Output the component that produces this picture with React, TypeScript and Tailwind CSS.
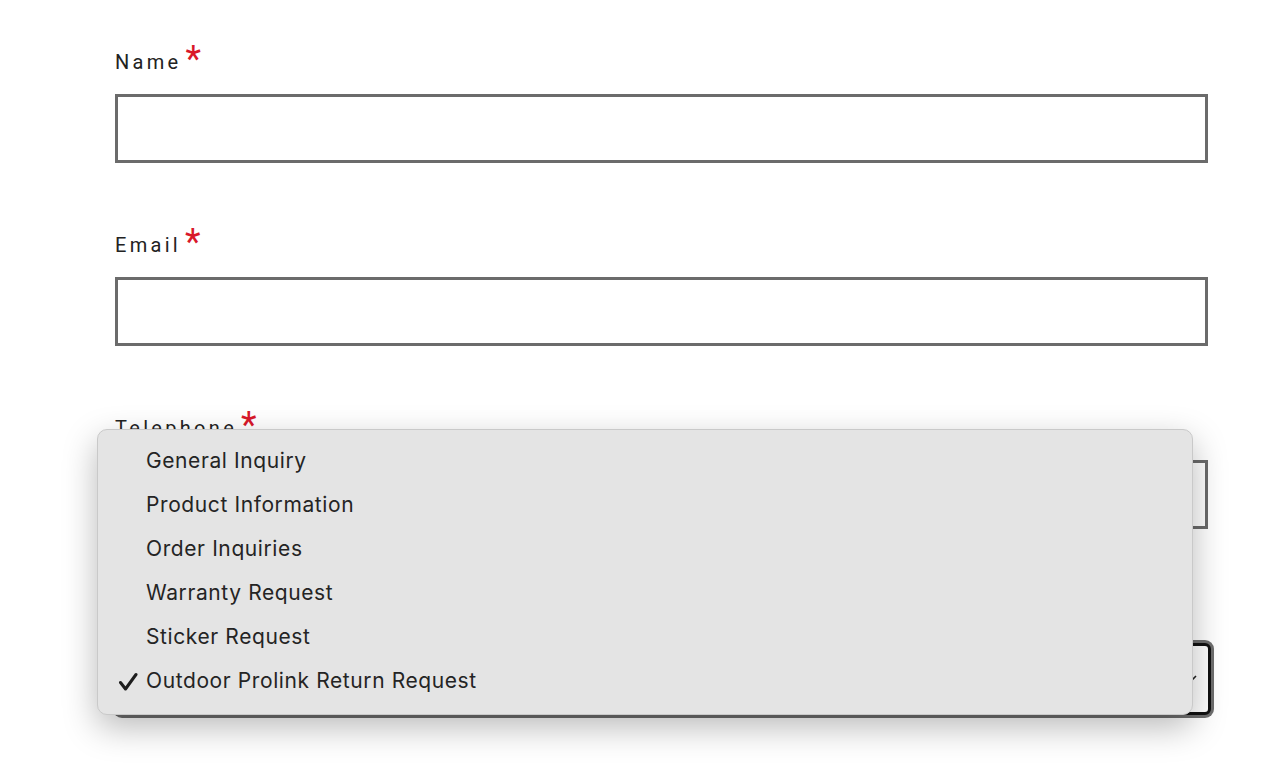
import React from "react";

const Field = ({ label, children }: { label: string; children?: React.ReactNode }) => (
  <div className="mb-[71px]">
    <div className="flex items-start h-[24px] mb-[19px] font-['Roboto',sans-serif] text-[20px] leading-[24px] text-[#222]">
      {label && (
        <>
          <span className="tracking-[3.3px] mt-[-1px]">{label}</span>
          <span className="text-[#d9182a] text-[36px] leading-[24px] ml-[4px] mt-[-4px]">*</span>
        </>
      )}
    </div>
    {children ?? <div className="h-[69px] border-[3px] border-[#6b6b6b] bg-white" />}
  </div>
);

const items = [
  "General Inquiry",
  "Product Information",
  "Order Inquiries",
  "Warranty Request",
  "Sticker Request",
  "Outdoor Prolink Return Request",
];

export default function App() {
  return (
    <div className="relative w-[1272px] h-[774px] overflow-hidden bg-white">
      <div className="pt-[51px] pl-[115px] w-[1208px]">
        <Field label="Name" />
        <Field label="Email" />
        <Field label="Telephone" />
        <Field label="">
          <div className="h-[72px] ml-[1px] mr-[-3px] border-[3px] border-[#111] rounded-[6px] shadow-[0_0_0_3px_#6e6e6e] bg-white flex items-center justify-end pr-[10px]">
            <svg width="14" height="10" viewBox="0 0 14 10" fill="none">
              <path d="M2 2l5 5 5-5" stroke="#222" strokeWidth="1.6" />
            </svg>
          </div>
        </Field>
      </div>

      <div className="absolute left-[97px] top-[429px] w-[1096px] h-[286px] rounded-[10px] bg-[#e4e4e4] border border-[#c9c9c9] shadow-[0_12px_34px_rgba(0,0,0,0.28)] pt-[9px] font-['Inter','Noto_Sans',sans-serif] text-[21px] tracking-[0.6px] text-[#242424]">
        {items.map((t, i) => (
          <div key={t} className="relative h-[44px] flex items-center pl-[48px]">
            {i === items.length - 1 && (
              <svg className="absolute left-[20px] top-[13px]" width="20" height="20" viewBox="0 0 20 20" fill="none">
                <path d="M2.5 10.5l5 6.5L18 2.5" stroke="#1d1d1d" strokeWidth="3" strokeLinecap="round" strokeLinejoin="round" />
              </svg>
            )}
            <span>{t}</span>
          </div>
        ))}
      </div>
    </div>
  );
}
